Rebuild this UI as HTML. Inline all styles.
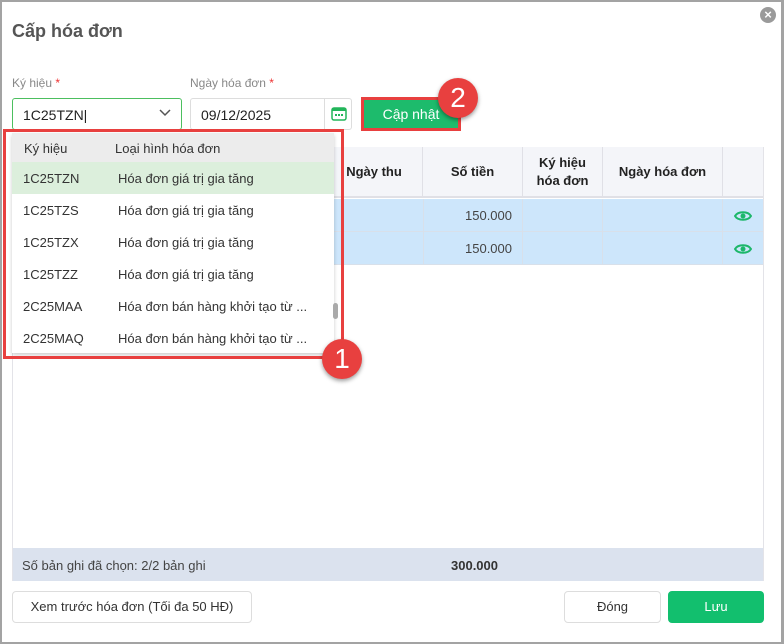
<!DOCTYPE html>
<html><head><meta charset="utf-8"><style>
*{box-sizing:border-box;margin:0;padding:0}
body{width:784px;height:644px;background:#fff;font-family:"Liberation Sans",sans-serif;position:relative;overflow:hidden;color:#333}
.a{position:absolute}
.frame{left:0;top:0;width:784px;height:644px;border:2px solid #a3a3a3;border-right-width:3px}
h1{position:absolute;left:12px;top:21px;font-size:18px;font-weight:bold;color:#555;letter-spacing:0}
.lbl{font-size:12px;color:#888}
.lbl b{color:#e33;font-weight:normal}
.inp{border:1px solid #ddd;border-radius:3px;height:32px;font-size:14px;color:#222;padding:8px 10px}
.tbl{left:12px;top:147px;width:752px;height:434px;border:1px solid #e3e3e8}
.th{top:147px;height:51px;background:#f4f5f9;border-right:1px solid #e0e0e6;border-bottom:2px solid #e0e0e6;font-size:13px;font-weight:bold;color:#222;display:flex;align-items:center;justify-content:center;text-align:center;line-height:18px}
.row{left:13px;width:750px;height:33px;background:#cde6fb;border-bottom:1px solid #d8e0ea}
.cell{height:33px;border-right:1px solid #d8e0ea}
.num{font-size:13px;color:#444}
.dd{left:12px;top:133px;width:322px;height:220px;background:#fff;box-shadow:0 2px 4px rgba(0,0,0,.2)}
.it{position:absolute;left:0;width:322px;height:32px;font-size:13px;color:#333}
.it span{position:absolute;top:9px}
.badge{width:40px;height:40px;border-radius:50%;background:#e8403f;color:#fff;font-size:28px;text-align:center;line-height:40px;box-shadow:0 2px 4px rgba(0,0,0,.4)}
.btn{border:1px solid #ddd;border-radius:4px;background:#fff;font-size:13px;color:#333;text-align:center}
</style></head><body>
<div class="a frame"></div>
<h1>Cấp hóa đơn</h1>
<div class="a" style="left:760px;top:7px;width:16px;height:16px;border-radius:50%;background:#9a9a9a;color:#fff;font-size:13px;line-height:16px;text-align:center;font-weight:bold">×</div>
<div class="a lbl" style="left:12px;top:76px">Ký hiệu <b>*</b></div>
<div class="a lbl" style="left:190px;top:76px">Ngày hóa đơn <b>*</b></div>
<div class="a inp" style="left:12px;top:98px;width:170px;border-color:#4cbf5f">1C25TZN|</div>
<svg class="a" style="left:159px;top:109px" width="12" height="8"><path d="M1 1l5 5 5-5" stroke="#555" stroke-width="1.5" fill="none"/></svg>
<div class="a inp" style="left:190px;top:98px;width:162px">09/12/2025</div>
<div class="a" style="left:324px;top:99px;width:1px;height:30px;background:#ddd"></div>
<svg class="a" style="left:331px;top:106px" width="16" height="15"><rect x="1" y="2" width="14" height="12" rx="2" fill="none" stroke="#22b55a" stroke-width="1.5"/><rect x="1" y="2" width="14" height="3" fill="#22b55a"/><rect x="4" y="8" width="2" height="2" fill="#22b55a"/><rect x="7" y="8" width="2" height="2" fill="#22b55a"/><rect x="10" y="8" width="2" height="2" fill="#22b55a"/></svg>
<div class="a" style="left:361px;top:97px;width:100px;height:34px;border:3px solid #e8403f;background:#1dbb6c;color:#fff;font-size:14px;text-align:center;line-height:28px">Cập nhật</div>
<div class="a badge" style="left:438px;top:78px">2</div>

<div class="a tbl"></div>
<div class="a th" style="left:13px;width:410px;background:#f4f5f9"></div>
<div class="a th" style="left:335px;width:78px;border-right:none">Ngày thu</div>
<div class="a th" style="left:423px;width:100px">Số tiền</div>
<div class="a th" style="left:523px;width:80px">Ký hiệu<br>hóa đơn</div>
<div class="a th" style="left:603px;width:120px">Ngày hóa đơn</div>
<div class="a th" style="left:723px;width:40px;border-right:none"></div>
<div class="a row" style="top:199px"></div>
<div class="a row" style="top:232px"></div>
<div class="a cell" style="left:423px;top:199px;width:100px;border-left:1px solid #d8e0ea;height:66px"></div>
<div class="a cell" style="left:523px;top:199px;width:80px;height:66px"></div>
<div class="a cell" style="left:603px;top:199px;width:120px;height:66px"></div>
<div class="a num" style="left:465px;top:208px">150.000</div>
<div class="a num" style="left:465px;top:241px">150.000</div>
<svg class="a" style="left:734px;top:210px" width="18" height="12"><path d="M1 6C4 1 14 1 17 6C14 11 4 11 1 6Z" fill="none" stroke="#1db76a" stroke-width="2"/><circle cx="9" cy="6" r="2.5" fill="#1db76a"/></svg>
<svg class="a" style="left:734px;top:243px" width="18" height="12"><path d="M1 6C4 1 14 1 17 6C14 11 4 11 1 6Z" fill="none" stroke="#1db76a" stroke-width="2"/><circle cx="9" cy="6" r="2.5" fill="#1db76a"/></svg>
<div class="a" style="left:13px;top:548px;width:750px;height:33px;background:#dbe2ee"></div>
<div class="a" style="left:22px;top:558px;font-size:13px;color:#444">Số bản ghi đã chọn: 2/2 bản ghi</div>
<div class="a" style="left:451px;top:558px;font-size:13px;font-weight:bold;color:#333">300.000</div>

<div class="a dd">
<div class="it" style="top:0;height:29px;background:#ececec"><span style="left:12px;top:8px">Ký hiệu</span><span style="left:103px;top:8px">Loại hình hóa đơn</span></div>
<div class="it" style="top:29px;background:#dcefdc"><span style="left:11px">1C25TZN</span><span style="left:106px">Hóa đơn giá trị gia tăng</span></div>
<div class="it" style="top:61px"><span style="left:11px">1C25TZS</span><span style="left:106px">Hóa đơn giá trị gia tăng</span></div>
<div class="it" style="top:93px"><span style="left:11px">1C25TZX</span><span style="left:106px">Hóa đơn giá trị gia tăng</span></div>
<div class="it" style="top:125px"><span style="left:11px">1C25TZZ</span><span style="left:106px">Hóa đơn giá trị gia tăng</span></div>
<div class="it" style="top:157px"><span style="left:11px">2C25MAA</span><span style="left:106px">Hóa đơn bán hàng khởi tạo từ ...</span></div>
<div class="it" style="top:189px"><span style="left:11px">2C25MAQ</span><span style="left:106px">Hóa đơn bán hàng khởi tạo từ ...</span></div>
<div class="a" style="left:321px;top:170px;width:5px;height:16px;border-radius:3px;background:#aaa"></div>
</div>
<div class="a" style="left:3px;top:129px;width:341px;height:230px;border:3px solid #e8403f"></div>
<div class="a badge" style="left:322px;top:339px">1</div>

<div class="a btn" style="left:12px;top:591px;width:240px;height:32px;line-height:30px">Xem trước hóa đơn (Tối đa 50 HĐ)</div>
<div class="a btn" style="left:564px;top:591px;width:97px;height:32px;line-height:30px">Đóng</div>
<div class="a btn" style="left:668px;top:591px;width:96px;height:32px;line-height:32px;background:#12bf6e;border:none;color:#fff">Lưu</div>
</body></html>
